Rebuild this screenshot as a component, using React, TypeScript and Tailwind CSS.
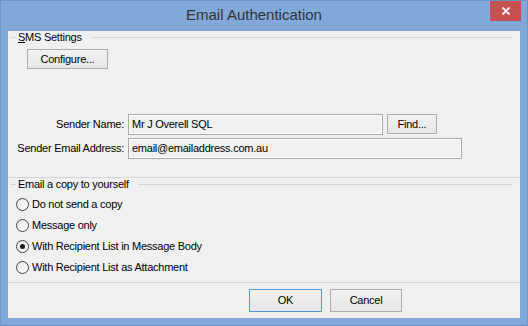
import React, { useState } from 'react';

const copyOptions = [
  'Do not send a copy',
  'Message only',
  'With Recipient List in Message Body',
  'With Recipient List as Attachment',
];

function GroupTitle({ children }: { children: React.ReactNode }) {
  return (
    <div className="flex items-center h-[13px] pl-[2px] pr-[8px]">
      <div className="w-[6px] h-px bg-[#d5d5d5]" />
      <span className="ml-[2px] mr-[9px] leading-[13px] whitespace-nowrap">{children}</span>
      <div className="flex-1 h-px bg-[#d5d5d5]" />
    </div>
  );
}

function Button({ label, className = '', primary = false }: { label: React.ReactNode; className?: string; primary?: boolean }) {
  return (
    <button
      className={
        'flex items-center justify-center bg-linear-to-b from-[#f2f2f2] to-[#e6e6e6] border text-black leading-none ' +
        (primary ? 'border-[#4d97e0] ' : 'border-[#acacac] ') +
        className
      }
    >
      {label}
    </button>
  );
}

function Field({ value, className = '' }: { value: string; className?: string }) {
  return (
    <div
      className={
        'h-[21px] border border-[#a9a9a9] bg-[#f0f0f0] shadow-[inset_1px_1px_0_#ffffff,inset_-1px_-1px_0_#ffffff] flex items-center pl-[3px] whitespace-nowrap ' +
        className
      }
    >
      {value}
    </div>
  );
}

export default function App() {
  const [copyMode, setCopyMode] = useState(2);

  return (
    <div className="w-[528px] h-[326px] bg-[#81a8d8] border border-[#6e94c6] flex flex-col relative text-[11px] tracking-[-0.25px] text-black font-['Liberation_Sans',Arial,sans-serif]">
      {/* title bar */}
      <div className="h-[30px] flex justify-center pr-[20px] pt-[5px]">
        <span className="text-[15px] leading-[18px] tracking-normal text-[#333333]">Email Authentication</span>
      </div>
      <button className="absolute top-0 right-[6px] w-[31px] h-[20px] bg-[#c75050] flex items-center justify-center">
        <svg width="8" height="8" viewBox="0 0 8 8">
          <path d="M0.5 0.5 L7.5 7.5 M7.5 0.5 L0.5 7.5" stroke="#ffffff" strokeWidth="1.8" />
        </svg>
      </button>

      {/* client area */}
      <div className="mx-[7px] h-[287px] bg-[#f0f0f0] flex flex-col">
        <div className="h-[147px] border-b border-[#d5d5d5]">
          <GroupTitle>
            <span className="underline">S</span>MS Settings
          </GroupTitle>
          <Button label="Configure..." className="ml-[19px] mt-[5px] w-[81px] h-[20px]" />

          <div className="mt-[45px] flex flex-col gap-[3px]">
            <div className="flex items-center">
              <span className="w-[116px] text-right whitespace-nowrap">Sender Name:</span>
              <Field value="Mr J Overell SQL" className="ml-[4px] w-[255px]" />
              <Button label="Find..." className="ml-[4px] w-[50px] h-[20px] self-start" />
            </div>
            <div className="flex items-center">
              <span className="w-[116px] text-right whitespace-nowrap">Sender Email Address:</span>
              <Field value="email@emailaddress.com.au" className="ml-[4px] w-[334px]" />
            </div>
          </div>
        </div>

        <div className="h-[105px] border-b border-[#d5d5d5]">
          <GroupTitle>Email a copy to yourself</GroupTitle>
          <div className="mt-[3px] pl-[8px]">
            {copyOptions.map((opt, i) => (
              <label key={opt} className="flex items-center h-[21px]" onClick={() => setCopyMode(i)}>
                <span className="w-[13px] h-[13px] rounded-full border border-[#434343] bg-linear-to-br from-[#e6e6e6] to-[#ffffff] flex items-center justify-center">
                  {copyMode === i && <span className="w-[5px] h-[5px] rounded-full bg-[#1a1a1a]" />}
                </span>
                <span className="ml-[3px] whitespace-nowrap">{opt}</span>
              </label>
            ))}
          </div>
        </div>

        <div className="flex-1 flex items-start pt-[6px] pl-[241px] gap-[8px]">
          <Button label="OK" primary className="w-[73px] h-[23px]" />
          <Button label="Cancel" className="w-[72px] h-[23px]" />
        </div>
      </div>
    </div>
  );
}
